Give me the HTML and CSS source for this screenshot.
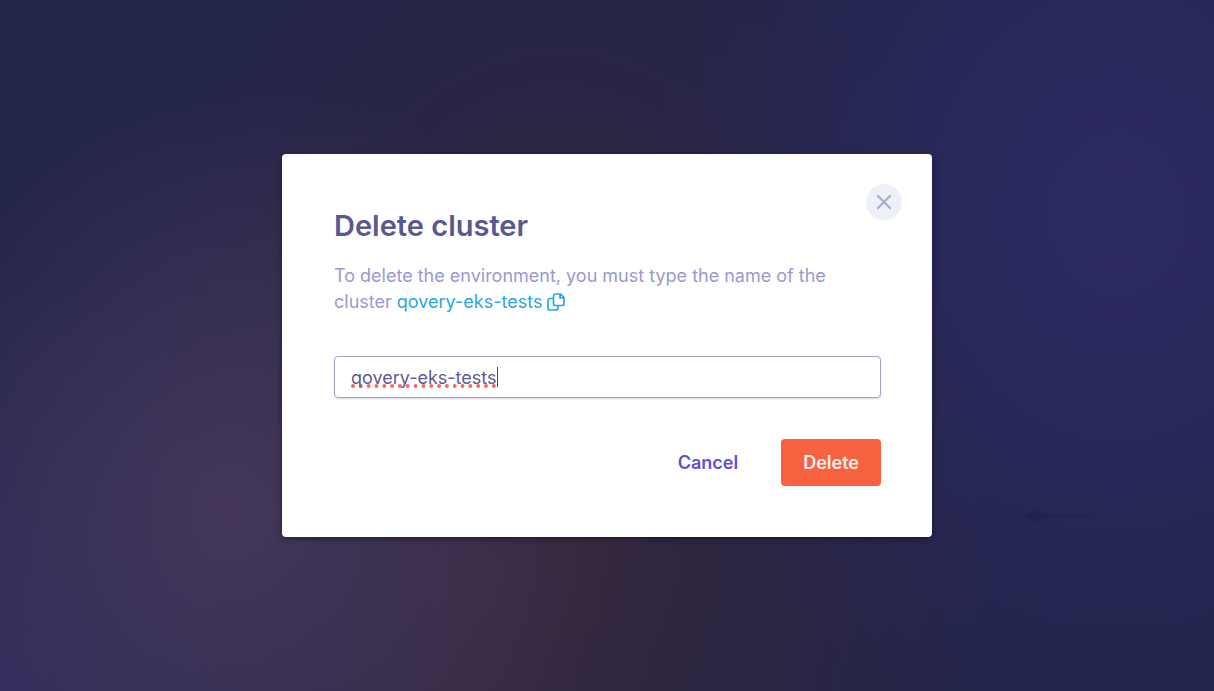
FILE: index.html
```html
<!DOCTYPE html>
<html lang="en">
<head>
<meta charset="utf-8">
<meta name="viewport" content="width=device-width, initial-scale=1">
<title>Delete cluster</title>
<link rel="stylesheet" href="styles.css">
</head>
<body>
<main class="backdrop">
  <svg class="pointer" viewBox="0 0 66 18" aria-hidden="true"><path d="M0 9 15 1v7h51v3H15v7z" fill="#21234a"/></svg>
  <form class="modal" role="dialog" aria-labelledby="title">
    <button class="close" type="button" aria-label="Close">
      <svg width="16" height="16" viewBox="0 0 16 16"><path d="M2 2l12 12M14 2L2 14" stroke="#a3b1cc" stroke-width="2.400" stroke-linecap="round"/></svg>
    </button>
    <h1 class="title" id="title">Delete cluster</h1>
    <p class="message">To delete the environment, you must type the name of the cluster <span class="name">qovery-eks-tests</span> <button class="copy" type="button" aria-label="Copy name"><svg class="copy-icon" viewBox="0 0 18 18" aria-hidden="true"><path d="M8.500 1h5l3.500 3.500v6a2 2 0 0 1-2 2H8.500a2 2 0 0 1-2-2V3a2 2 0 0 1 2-2zM13 1.200V5h3.800M6 5.500H3a2 2 0 0 0-2 2V15a2 2 0 0 0 2 2h6a2 2 0 0 0 2-2v-2" fill="none" stroke="currentColor" stroke-width="1.700" stroke-linejoin="round"/></svg></button></p>
    <label class="field"><input class="field-input" type="text" aria-label="Cluster name" value="qovery-eks-tests" spellcheck="false"><span class="caret"></span></label>
    <div class="actions">
      <button class="button cancel" type="button">Cancel</button>
      <button class="button delete" type="submit">Delete</button>
    </div>
  </form>
</main>
</body>
</html>
```
FILE: styles.css
```css
* {
  box-sizing: border-box;
}

body {
  margin: 0;
  font-family: Inter, "Liberation Sans", sans-serif;
}

button,
input {
  font: inherit;
  border: 0;
  padding: 0;
  background: none;
}

button {
  cursor: pointer;
}

.backdrop {
  position: relative;
  min-height: 100vh;
  display: grid;
  place-items: center;
  padding: 16px;
  background:
    radial-gradient(ellipse 38% 80% at 92% 31%, #2d2b64 0%, #2b2a6099 50%, #2b2a6000 100%),
    radial-gradient(ellipse 30% 65% at 19% 74%, #44375b 0%, #43375b99 45%, #43375c00 100%),
    radial-gradient(ellipse 16% 45% at 38% 85%, #442c4580 0%, #442c4500 100%),
    radial-gradient(ellipse 36% 100% at 46% 75%, #34283e 0%, #33283e80 55%, #33283e00 100%),
    radial-gradient(ellipse 25% 60% at 0% 100%, #302c60 0%, #302c6000 100%),
    #222449;
}

.pointer {
  position: absolute;
  left: 84.400%;
  top: 73.400%;
  width: 64px;
}

.modal {
  position: relative;
  width: 100%;
  max-width: 650px;
  padding: 52px 51px 51px 52px;
  border-radius: 4px;
  background: #fff;
  box-shadow: 0 2px 6px #00000066;
}

.close {
  position: absolute;
  top: 30px;
  right: 30px;
  width: 36px;
  height: 36px;
  display: grid;
  place-items: center;
  border-radius: 50%;
  background: #edf1f7;
}

.title {
  margin: 0 0 17px;
  font-size: 29px;
  font-weight: 600;
  line-height: 40px;
  color: #585992;
}

.message {
  max-width: 520px;
  margin: 0 0 41px;
  font-size: 18px;
  line-height: 26px;
  color: #9a99d0;
}

.name,
.copy {
  color: #2ba6de;
}

.copy-icon {
  display: block;
  width: 18px;
  height: 18px;
}

.copy {
  vertical-align: -3px;
}

.field {
  display: flex;
  align-items: center;
  height: 42px;
  padding: 0 16px;
  border: 1px solid #a5a3c8;
  border-radius: 4px;
  box-shadow: 0 1px 2px #58599240;
}

.field-input {
  field-sizing: content;
  max-width: 100%;
  outline: 0;
  font-size: 18px;
  color: #5b5b94;
  text-decoration: underline dotted #f26c63 4px;
  text-decoration-skip-ink: none;
  text-underline-offset: 1px;
}

.caret {
  width: 1px;
  height: 20px;
  background: #45467f;
}

.actions {
  display: flex;
  justify-content: flex-end;
  gap: 21px;
  margin-top: 41px;
}

.button {
  height: 47px;
  padding: 0 22px;
  border-radius: 4px;
  font-size: 18px;
  font-weight: 600;
}

.cancel {
  color: #5b50d6;
}

.delete {
  background: #f66240;
  color: #fff0ec;
}
```
